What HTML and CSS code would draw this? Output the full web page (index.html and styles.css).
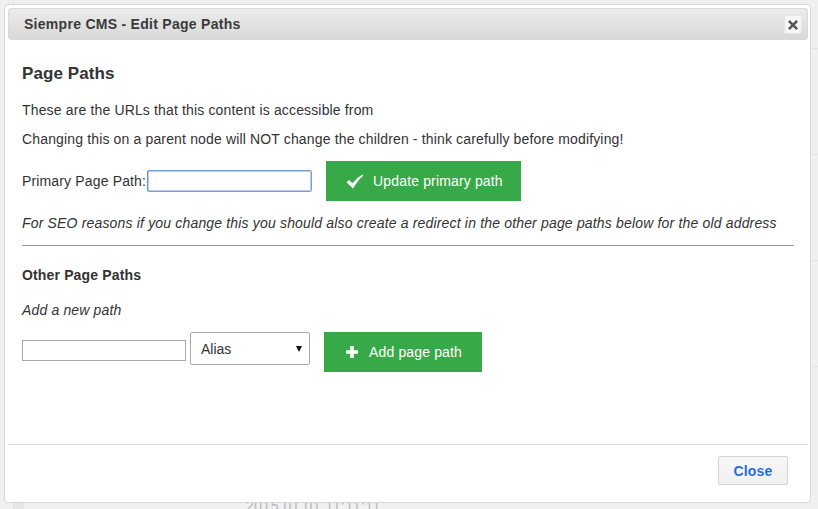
FILE: index.html
```html
<!DOCTYPE html>
<html>
<head>
<meta charset="utf-8">
<link rel="stylesheet" href="styles.css">
</head>
<body>
<div class="bg">
  <div class="bg-row first"></div>
  <div class="bg-row"></div>
  <div class="bg-row"></div>
  <div class="bg-row"></div>
  <div class="bg-row last"><span class="bg-date">2015 01 01 11:11:11</span></div>
</div>

<div class="dialog">
  <div class="titlebar">
    <span class="title">Siempre CMS - Edit Page Paths</span>
    <button class="x-btn" aria-label="close">
      <svg width="10" height="10" viewBox="0 0 10 10"><path d="M1.8 1.8 L8.2 8.2 M8.2 1.8 L1.8 8.2" stroke="#555" stroke-width="2.5" stroke-linecap="square"/></svg>
    </button>
  </div>
  <div class="body">
    <h2 class="heading">Page Paths</h2>
    <p class="text first">These are the URLs that this content is accessible from</p>
    <p class="text">Changing this on a parent node will NOT change the children - think carefully before modifying!</p>
    <div class="row primary">
      <label class="label">Primary Page Path:</label><input class="path-input focused" type="text" value="">
      <button class="green-btn update">
        <svg class="ico" width="18" height="15" viewBox="0 0 18 15"><path d="M0.5 8.2 L3 6 L6.5 9.3 Q11 3.5 16.5 0.5 L17.5 1.5 Q12 6 7 14.5 Z" fill="#fff"/></svg>
        <span class="btn-text">Update primary path</span>
      </button>
    </div>
    <p class="text italic seo">For SEO reasons if you change this you should also create a redirect in the other page paths below for the old address</p>
    <hr class="rule">
    <h3 class="subheading">Other Page Paths</h3>
    <p class="text italic add">Add a new path</p>
    <div class="row other">
      <input class="new-input" type="text">
      <span class="select-wrap">
        <select class="type-select"><option>Alias</option></select>
      </span>
      <button class="green-btn add-btn">
        <svg class="ico" width="14" height="14" viewBox="0 0 14 14"><path d="M7 1 V13 M1 7 H13" stroke="#fff" stroke-width="3.6"/></svg>
        <span class="btn-text">Add page path</span>
      </button>
    </div>
  </div>
  <div class="footer">
    <button class="close-btn">Close</button>
  </div>
</div>
</body>
</html>
```
FILE: styles.css
```css
html, body {
  margin: 0;
  padding: 0;
}
body {
  width: 818px;
  height: 509px;
  overflow: hidden;
  position: relative;
  background: #f0f0f0;
  font-family: "Liberation Sans", Arial, sans-serif;
  color: #333;
}
.bg {
  display: flex;
  flex-direction: column;
  border-left: 1px solid #e2e2e2;
  margin-left: 13px;
}
.bg-row {
  height: 106px;
  border-bottom: 1px solid #e3e3e3;
  box-sizing: border-box;
}
.bg-row.first {
  height: 49px;
}
.bg-row.last {
  border-bottom: none;
  height: 160px;
  padding-left: 232px;
  padding-top: 130px;
  background: linear-gradient(to right, #e6e6e6 0, #e6e6e6 10px, transparent 10px);
}
.bg-date {
  font-size: 14px;
  letter-spacing: 0.5px;
  color: #b8b8b8;
}
.dialog {
  position: absolute;
  left: 4px;
  top: 4px;
  width: 807px;
  height: 499px;
  box-sizing: border-box;
  background: #fff;
  border: 1px solid #d8d8d8;
  border-radius: 4px;
  padding: 3px 2px 0 3px;
  display: flex;
  flex-direction: column;
}
.titlebar {
  height: 32px;
  box-sizing: border-box;
  border: 1px solid #dadada;
  border-radius: 3px;
  background: linear-gradient(#ebebeb, #d9d9d9);
  display: flex;
  align-items: center;
  justify-content: space-between;
  padding: 0 5px 0 15px;
}
.title {
  font-weight: bold;
  font-size: 14px;
  letter-spacing: 0.28px;
  color: #3a3a3a;
}
.x-btn {
  width: 18px;
  height: 19px;
  margin-top: 1px;
  padding: 0;
  border: 1px solid #e6e6e6;
  border-radius: 2px;
  background: #f6f6f6;
  display: flex;
  align-items: center;
  justify-content: center;
}
.body {
  flex: 1;
  padding: 24px 14px 0 14px;
  border-bottom: 1px solid #dcdcdc;
  letter-spacing: 0.15px;
}
.heading {
  margin: 0;
  font-size: 17px;
  line-height: 20px;
  font-weight: bold;
  color: #333;
  letter-spacing: 0.1px;
}
.text {
  margin: 9px 0 0;
  font-size: 14px;
  line-height: 20px;
  color: #333;
}
.text.first {
  margin-top: 16px;
}
.italic {
  font-style: italic;
}
.seo {
  letter-spacing: 0.17px;
  margin-top: 12px;
}
.row {
  display: flex;
}
.primary {
  margin-top: 12px;
  margin-bottom: 1px;
  align-items: center;
  height: 40px;
}
.label {
  font-size: 14px;
  color: #333;
  margin-right: 1px;
}
.path-input {
  width: 165px;
  height: 22px;
  box-sizing: border-box;
  border: 1px solid #7a9fd8;
  outline: 1px solid #b9cdef;
  outline-offset: -2px;
  border-radius: 2px;
  padding: 0 2px;
  font: 14px "Liberation Sans", Arial, sans-serif;
  border-left: 2px solid #6a8fd0;
}
.green-btn {
  background: #38a948;
  color: #fff;
  border: none;
  font: 14px "Liberation Sans", Arial, sans-serif;
  letter-spacing: 0.15px;
  height: 40px;
  display: flex;
  align-items: center;
  gap: 8px;
  padding: 0 0 0 20px;
  white-space: nowrap;
  flex-shrink: 0;
}
.ico {
  flex-shrink: 0;
}
.btn-text {
  white-space: nowrap;
}
.update {
  margin-left: 14px;
  width: 195px;
  gap: 9px;
}
.rule {
  margin: 12px 0 0;
  border: none;
  border-top: 1px solid #9a9a9a;
  height: 0;
}
.subheading {
  margin: 19px 0 0;
  font-size: 14px;
  line-height: 20px;
  font-weight: bold;
  color: #333;
}
.add {
  margin-top: 15px;
}
.other {
  margin-top: 12px;
  align-items: flex-start;
}
.new-input {
  width: 164px;
  height: 21px;
  box-sizing: border-box;
  margin-top: 8px;
  border: 1px solid #a9a9a9;
  padding: 0 2px;
  font: 14px "Liberation Sans", Arial, sans-serif;
}
.select-wrap {
  position: relative;
  margin-left: 4px;
}
.select-wrap::after {
  content: "";
  position: absolute;
  right: 8px;
  top: 14px;
  border-left: 3.5px solid transparent;
  border-right: 3.5px solid transparent;
  border-top: 6px solid #111;
  pointer-events: none;
}
.type-select {
  appearance: none;
  -webkit-appearance: none;
  width: 120px;
  height: 33px;
  box-sizing: border-box;
  border: 1px solid #a9a9a9;
  border-radius: 2px;
  background: #fff;
  padding: 0 10px;
  font: 14px "Liberation Sans", Arial, sans-serif;
  color: #333;
}
.add-btn {
  margin-left: 14px;
  width: 158px;
  padding-left: 21px;
  gap: 10px;
}
.footer {
  height: 57px;
  display: flex;
  justify-content: flex-end;
  align-items: flex-start;
  padding: 11px 20px 0 0;
  box-sizing: border-box;
}
.close-btn {
  width: 70px;
  height: 29px;
  border: 1px solid #d3d3d3;
  border-radius: 2px;
  background: linear-gradient(#f8f8f8, #f0f0f0);
  color: #1f6fe0;
  font: bold 14px "Liberation Sans", Arial, sans-serif;
  letter-spacing: 0.2px;
  padding: 0;
}
```
